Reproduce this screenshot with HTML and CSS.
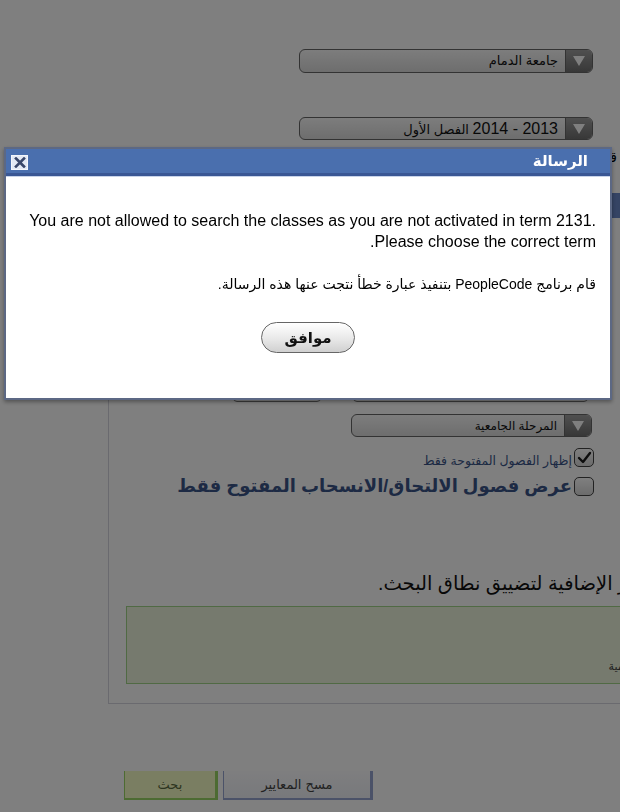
FILE: index.html
```html
<!DOCTYPE html>
<html lang="ar">
<head>
  <meta charset="UTF-8">
  <meta name="viewport" content="width=device-width, initial-scale=1.0">
  <title>البحث عن الفصول</title>
  <link rel="stylesheet" href="styles.css">
</head>
<body>
  <div class="page">
    <div class="top-fields">
      <div class="select wide">
        <span class="select-text">جامعة الدمام</span>
        <span class="select-arrow"></span>
      </div>
      <div class="select wide term">
        <span class="select-text"><span class="num">2013 - 2014</span> الفصل الأول</span>
        <span class="select-arrow"></span>
      </div>
      <div class="cut-label">قائمة</div>
    </div>

    <div class="panel">
      <div class="panel-head"></div>
      <div class="panel-body">
        <div class="input-row">
          <span class="input short"></span>
          <span class="input long"></span>
        </div>
        <div class="select mid">
          <span class="select-text small">المرحلة الجامعية</span>
          <span class="select-arrow"></span>
        </div>
        <label class="check-row">
          <span class="check-label small">إظهار الفصول المفتوحة فقط</span>
          <span class="checkbox">
            <svg width="15" height="13" viewBox="0 0 15 13"><polyline points="2,7 6,11 13,2" fill="none" stroke="#1a1a1a" stroke-width="2.4" stroke-linecap="round" stroke-linejoin="round"/></svg>
          </span>
        </label>
        <label class="check-row big-row">
          <span class="check-label big">عرض فصول الالتحاق/الانسحاب المفتوح فقط</span>
          <span class="checkbox"></span>
        </label>
        <p class="hint">استخدم المعايير الإضافية لتضييق نطاق البحث.</p>
        <div class="criteria-box">
          <span class="criteria-text">المعايير الأكاديمية</span>
        </div>
      </div>
    </div>

    <div class="actions">
      <button class="btn btn-search">بحث</button>
      <button class="btn btn-clear">مسح المعايير</button>
    </div>
  </div>

  <div class="overlay"></div>

  <div class="dialog">
    <div class="dialog-title">
      <span class="title-text">الرسالة</span>
      <span class="close-box">
        <svg width="12" height="11" viewBox="0 0 12 11"><path d="M2 1.5 L10 9.5 M10 1.5 L2 9.5" stroke="#38466a" stroke-width="2.6" stroke-linecap="square"/></svg>
      </span>
    </div>
    <div class="dialog-body">
      <p class="msg">You are not allowed to search the classes as you are not activated in term 2131. Please choose the correct term.</p>
      <p class="msg-ar">قام برنامج PeopleCode بتنفيذ عبارة خطأ نتجت عنها هذه الرسالة.</p>
      <div class="dialog-actions">
        <button class="ok-btn">موافق</button>
      </div>
    </div>
  </div>
</body>
</html>
```

FILE: styles.css
```css
* {
  margin: 0;
  padding: 0;
  box-sizing: border-box;
}
html, body {
  height: 100%;
  overflow: hidden;
}
body {
  font-family: "Liberation Sans", "DejaVu Sans", sans-serif;
  background: #fff;
  color: #000;
}
.page {
  width: 620px;
  padding-top: 49px;
}
.top-fields {
  display: flex;
  flex-direction: column;
  align-items: flex-end;
  padding-right: 27px;
}
.select {
  display: flex;
  height: 24px;
  border: 1px solid #666;
  border-radius: 6px;
  background: linear-gradient(#fafafa, #dcdcdc);
  overflow: hidden;
}
.select.wide {
  width: 294px;
}
.select.term {
  margin-top: 44px;
  height: 23px;
}
.select-text {
  flex: 1;
  direction: rtl;
  text-align: right;
  padding-right: 7px;
  font-size: 13px;
  line-height: 22px;
  color: #111;
  white-space: nowrap;
}
.select-text.small {
  font-size: 12px;
}
.num {
  font-size: 16px;
}
.select-arrow {
  width: 27px;
  border-left: 1px solid #666;
  background: linear-gradient(#a0a0a0, #707070);
  display: flex;
  align-items: center;
  justify-content: center;
}
.select-arrow::after {
  content: "";
  border-left: 6px solid transparent;
  border-right: 6px solid transparent;
  border-top: 10px solid #fff;
}
.cut-label {
  direction: rtl;
  margin-right: -24px;
  margin-top: 8px;
  font-size: 14px;
  line-height: 18px;
  white-space: nowrap;
}

/* search criteria group */
.panel {
  margin-left: 108px;
  margin-top: 27px;
  width: 540px;
  border-left: 1px solid #d4d4de;
  border-bottom: 1px solid #d4d4de;
  height: 511px;
}
.panel-head {
  height: 25px;
  background: #6a88c8;
}
.panel-body {
  display: flex;
  flex-direction: column;
  align-items: flex-end;
  padding-right: 54px;
}
.input-row {
  display: flex;
  gap: 32px;
  margin-top: 162px;
  margin-right: 6px;
}
.input {
  height: 22px;
  border: 1px solid #777;
  border-radius: 4px;
  background: #fff;
}
.input.short {
  width: 88px;
}
.input.long {
  width: 235px;
}
.select.mid {
  width: 241px;
  height: 23px;
  margin-top: 12px;
  margin-right: 2px;
}
.check-row {
  display: flex;
  align-items: center;
  gap: 2px;
  margin-top: 10px;
}
.big-row {
  margin-top: 7px;
}
.checkbox {
  width: 20px;
  height: 19px;
  border: 1px solid #444;
  border-radius: 5px;
  background: linear-gradient(#fff, #d8d8d8);
  display: flex;
  align-items: center;
  justify-content: center;
}
.check-label {
  direction: rtl;
  color: #3a5588;
  white-space: nowrap;
}
.check-label.small {
  font-size: 12.5px;
  margin-top: 6px;
}
.check-label.big {
  font-size: 18px;
  font-weight: bold;
}
.hint {
  direction: rtl;
  align-self: flex-start;
  margin-left: 269px;
  margin-top: 72px;
  font-size: 19.5px;
  line-height: 28px;
  white-space: nowrap;
  color: #111;
}
.criteria-box {
  align-self: stretch;
  margin-left: 17px;
  margin-right: -104px;
  margin-top: 9px;
  height: 78px;
  border: 1px solid #a0d488;
  background: #ecf4dc;
  display: flex;
  align-items: flex-end;
  justify-content: flex-end;
  padding: 0 10px 10px 0;
}
.criteria-text {
  direction: rtl;
  font-size: 11px;
  color: #444;
  white-space: nowrap;
}
.actions {
  display: flex;
  gap: 5px;
  margin-left: 124px;
  margin-top: 67px;
}
.btn {
  height: 29px;
  font-family: "DejaVu Sans", sans-serif;
  font-size: 13px;
  border: none;
  border-left: 1px solid #e0e4ec;
  border-right: 3px solid;
  border-bottom: 2px solid;
}
.btn-search {
  width: 94px;
  background: #f4fcc4;
  color: #5a6a40;
  border-color: #9ad664;
}
.btn-clear {
  width: 150px;
  background: linear-gradient(#fdfdff, #f0f2f8);
  color: #444;
  border-color: #96a4d0;
}

.overlay {
  position: fixed;
  inset: 0;
  background: rgba(0, 0, 0, 0.5);
}

/* message dialog */
.dialog {
  position: fixed;
  left: 4px;
  top: 147px;
  width: 608px;
  height: 253px;
  border: 2px solid #5c6884;
  background: #fff;
  box-shadow: 0 2px 4px rgba(0, 0, 0, 0.35);
}
.dialog-title {
  display: flex;
  direction: rtl;
  align-items: center;
  justify-content: space-between;
  height: 27px;
  padding: 0 22px 0 5px;
  background: #4a6fae;
  border-bottom: 3px solid #3a5794;
  box-shadow: 0 1px 0 #c8d4ea;
}
.title-text {
  color: #fff;
  font-weight: bold;
  font-size: 15px;
}
.close-box {
  width: 17px;
  height: 15px;
  margin-top: 2px;
  background: #e2e8f4;
  border: 1px solid #f2f5fb;
  display: flex;
  align-items: center;
  justify-content: center;
}
.dialog-body {
  direction: rtl;
  text-align: right;
  padding: 34px 14px 0;
}
.msg {
  font-size: 16px;
  line-height: 21px;
}
.msg-ar {
  margin-top: 22px;
  font-size: 14px;
  line-height: 20px;
}
.dialog-actions {
  display: flex;
  justify-content: center;
  margin-top: 28px;
}
.ok-btn {
  width: 94px;
  height: 31px;
  border: 1px solid #666;
  border-radius: 16px;
  background: linear-gradient(#ffffff, #e8e8e8 55%, #d0d0d0);
  font-family: "DejaVu Sans", sans-serif;
  font-weight: bold;
  font-size: 15px;
  color: #111;
}
```
